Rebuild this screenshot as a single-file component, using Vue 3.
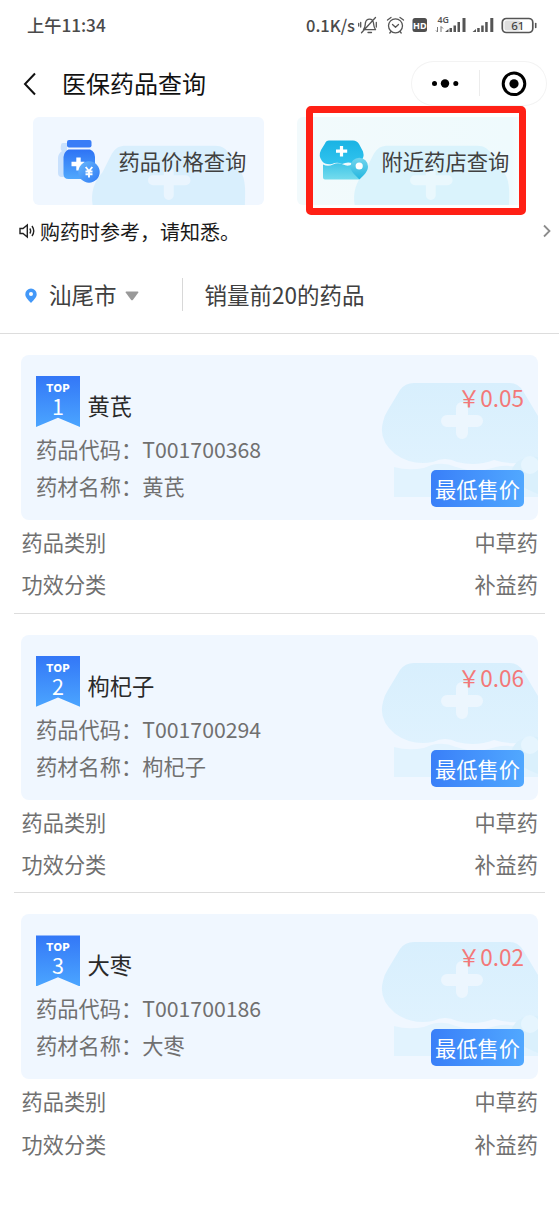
<script setup>
const drugs = [
  { rank: 1, name: '黄芪', code: 'T001700368', price: '0.05' },
  { rank: 2, name: '枸杞子', code: 'T001700294', price: '0.06' },
  { rank: 3, name: '大枣', code: 'T001700186', price: '0.02' },
]
</script>

<template>
  <div class="page">
    <header class="status">
      <span class="clock">上午11:34</span>
      <span class="speed">0.1K/s</span>
      <svg class="status-icons" width="180" height="24" viewBox="0 0 180 24">
        <g fill="none" stroke="#555" stroke-width="1.3" stroke-linecap="round" stroke-linejoin="round">
          <path d="M5.500 16.500C7.500 14.500 7 12 7.500 9.500C8.100 7 9.500 6.200 11.500 6.200C14 6.200 15.200 8 15.500 10C15.800 13 15.800 14.500 17.500 16.700H6.500M10 19.500H13.500M3.500 19.800L17.500 4.500M2.700 9.500V14M0.700 10.500V13M18.300 9.500V14" />
          <circle cx="37.500" cy="12.800" r="7" />
          <path d="M34.500 11.500L37.500 14.200L40.500 11.500M29.500 7L33 4.500M45.500 7L42 4.500M33 18.500L31.800 20M42 18.500L43.200 20" />
        </g>
        <rect x="54.500" y="5" width="14.500" height="14" rx="2.500" fill="#4f4f4f" />
        <text x="61.800" y="15.500" text-anchor="middle" font-size="9" font-weight="700" fill="#fff">HD</text>
        <text x="79.500" y="9.500" font-size="8.800" font-weight="600" fill="#555">4G</text>
        <path d="M79.500 14V19M78 17.500L79.500 19M83 19V13.500L85 15.500" fill="none" stroke="#777" stroke-width="1" />
        <g fill="#555">
          <path d="M87 19L90.500 16V19ZM91.500 15H94V19H91.500ZM95.500 12.500H98V19H95.500ZM99.500 9H102V19H99.500ZM104.500 5H107.500V19H104.500Z" />
          <path d="M114.500 19L118 16V19ZM119.200 15H121.700V19H119.200ZM123.200 12.500H125.700V19H123.200ZM127.200 9H129.700V19H127.200ZM132.300 5H135.300V19H132.300Z" />
        </g>
        <rect x="144.300" y="5.500" width="30.500" height="14" rx="4" fill="#fff" stroke="#555" stroke-width="1.700" />
        <rect x="146.500" y="7.500" width="16" height="10" rx="2" fill="#dedede" />
        <path d="M177.700 10.500V14.500" stroke="#555" stroke-width="1.600" stroke-linecap="round" />
        <text x="159.800" y="16.600" text-anchor="middle" font-size="11.500" font-weight="500" fill="#444">61</text>
      </svg>
    </header>

    <nav class="nav">
      <svg class="back" width="14" height="24" viewBox="0 0 14 24">
        <path d="M12 1.500L2 12L12 22.500" fill="none" stroke="#111" stroke-width="2" />
      </svg>
      <h1>医保药品查询</h1>
      <div class="capsule">
        <svg width="136" height="44" viewBox="0 0 136 44">
          <circle cx="23.500" cy="22.500" r="2.500" />
          <circle cx="34" cy="22.500" r="4.200" />
          <circle cx="44.800" cy="22.500" r="2.500" />
          <path d="M68.500 9V35" stroke="#ececec" />
          <circle cx="103" cy="22.800" r="10.800" fill="none" stroke="#000" stroke-width="3" />
          <circle cx="103" cy="22.800" r="4.600" />
        </svg>
      </div>
    </nav>

    <section class="tabs">
      <div class="tab price-tab">
        <svg class="tab-bg" width="231" height="89" viewBox="0 0 231 89">
          <path d="M59 89C57 77 60 66 69 56L78 38C82 31 86 29 93 29H183C190 29 194 32 198 38L207 53C213 60 214 69 213 89Z" fill="#d9effd" />
          <path d="M136 56V79M120 64H153" stroke="#eaf5fe" stroke-width="10" stroke-linecap="round" />
        </svg>
        <svg class="tab-icon" width="50" height="50" viewBox="0 0 50 50">
          <defs>
            <linearGradient id="jar" x2="0" y2="1"><stop stop-color="#2e73f5" /><stop offset="1" stop-color="#50a8fd" /></linearGradient>
            <linearGradient id="coin" x2="1" y2="1"><stop stop-color="#67b7fc" /><stop offset="1" stop-color="#2f7af5" /></linearGradient>
          </defs>
          <path d="M8 9Q8 7 10 7H14V14H18V41H9Q5 41 5 37V22Q5 18 9 15Q7 14 8 9Z" fill="#c9e1fd" />
          <rect x="14" y="4" width="24.500" height="7.500" rx="2" fill="#397df7" />
          <path d="M15.500 13.500H37Q42 15.500 42 21V38Q42 43 37 43H15.500Q10.500 43 10.500 38V21Q11 15.500 15.500 13.500Z" fill="url(#jar)" />
          <path d="M25.500 21.500V34.500M18.500 28H31.500" stroke="#fff" stroke-width="4.400" />
          <circle cx="36" cy="36" r="10.700" fill="url(#coin)" />
          <path d="M32.700 31L36 35L39.300 31M36 35V41.500M32.500 35.500H39.500M32.500 38.300H39.500" fill="none" stroke="#fff" stroke-width="1.900" />
        </svg>
        <span>药品价格查询</span>
      </div>
      <div class="tab store-tab">
        <svg class="tab-bg" width="231" height="89" viewBox="0 0 231 89">
          <path d="M57 89C55 77 58 66 67 56L76 38C80 31 84 29 91 29H181C188 29 192 32 196 38L205 53C213 60 214 69 213 89Z" fill="#daf3fc" />
          <path d="M134 56V79M118 64H151" stroke="#eaf8fd" stroke-width="10" stroke-linecap="round" />
        </svg>
        <svg class="tab-icon" width="50" height="50" viewBox="0 0 50 50">
          <defs>
            <linearGradient id="roof" x2="0" y2="1"><stop stop-color="#1ab3e4" /><stop offset="1" stop-color="#31c3ee" /></linearGradient>
            <linearGradient id="wall" x2="0" y2="1"><stop stop-color="#3fc5e8" /><stop offset="1" stop-color="#75dced" /></linearGradient>
            <linearGradient id="pin" x2="0" y2="1"><stop stop-color="#73d5ee" /><stop offset="1" stop-color="#23b6df" /></linearGradient>
          </defs>
          <path d="M5 28.500Q10 31 15 28.500Q20 26 25 28.500Q30 31 35 28Q39 26 41 29V43.500H7Q5 43.500 5 41.500Z" fill="url(#wall)" />
          <path d="M11 4.500H35Q39 4.500 41 8L45 15.500Q47 22 42 26Q38 29 34 27Q29 25.500 24 28Q19 25.500 14 28Q7 29 4 25Q0 20 3 14L7 7.500Q8 4.500 11 4.500Z" fill="url(#roof)" />
          <path d="M23.500 10V20.500M18 15.200H29.200" stroke="#fff" stroke-width="3.200" />
          <path d="M41.500 43.500C36 38 32.500 35 32.500 30.500A8.700 8.700 0 0 1 50 30.500C50 35.500 46 39 41.500 43.500Z" fill="url(#pin)" />
          <circle cx="41.200" cy="30" r="3.600" fill="#fff" />
        </svg>
        <span>附近药店查询</span>
        <div class="highlight"></div>
      </div>
    </section>

    <section class="notice">
      <svg width="17" height="16" viewBox="0 0 17 16" fill="none" stroke="#222" stroke-width="1.400">
        <path d="M1 5.500H4L8.300 2V14L4 10.500H1ZM10.800 5.500Q12.500 8 10.800 10.500M13 3Q16.500 8 13 13" />
      </svg>
      <span>购药时参考，请知悉。</span>
      <svg class="more" width="8" height="14" viewBox="0 0 8 14"><path d="M1 1.500L6.500 7L1 12.500" fill="none" stroke="#8c8c8c" stroke-width="1.800" /></svg>
    </section>

    <section class="filter">
      <svg class="pin" width="12" height="16" viewBox="0 0 12 16">
        <path d="M6 15C3 11.500 0.300 9.500 0.300 6.200A5.700 5.700 0 0 1 11.700 6.200C11.700 9.500 9 11.500 6 15Z" fill="#4398f8" />
        <circle cx="6" cy="6" r="2" fill="#fff" />
      </svg>
      <span class="city">汕尾市</span>
      <svg class="caret" width="14" height="10" viewBox="0 0 14 10"><path d="M1.200 0.500H12.800Q14 0.700 13.200 1.800L8 8.800Q7 9.800 6 8.800L0.800 1.800Q0 0.700 1.200 0.500Z" fill="#999" /></svg>
      <i class="divider"></i>
      <span>销量前20的药品</span>
    </section>

    <main class="list">
      <article v-for="d in drugs" :key="d.rank" class="drug">
        <div class="card">
          <svg class="card-bg" width="160" height="130" viewBox="0 0 160 130">
            <defs>
              <linearGradient id="shop" x2="0" y2="1"><stop stop-color="#d8effd" /><stop offset="1" stop-color="#dff2fe" /></linearGradient>
            </defs>
            <path d="M16 88Q30 92 46 89Q62 81 78 88Q98 95 118 88Q135 84 160 94V118H16Z" fill="#e2f3fe" />
            <path d="M36 4H132Q140 4 145 12L160 37V80Q138 88 116 81Q98 88 79 83Q67 77 55 83Q34 87 17 75Q0 61 5 43Q6 37 10 31L22 11Q27 4 36 4Z" fill="url(#shop)" />
            <path d="M84 29V54M69 42H99" stroke="#ecf6fe" stroke-width="12" stroke-linecap="round" />
            <path d="M134 90Q141 76 160 78V115Q137 106 134 96Z" fill="#daf0fc" />
            <circle cx="152" cy="86" r="9" fill="#e6f5fe" />
          </svg>
          <div class="head">
            <div class="ribbon"><b>TOP</b><span>{{ d.rank }}</span></div>
            <h2>{{ d.name }}</h2>
          </div>
          <p class="code">药品代码：{{ d.code }}</p>
          <p class="material">药材名称：{{ d.name }}</p>
          <div class="aside">
            <span class="price">￥{{ d.price }}</span>
            <span class="lowest">最低售价</span>
          </div>
        </div>
        <div class="row"><span>药品类别</span><span>中草药</span></div>
        <div class="row"><span>功效分类</span><span>补益药</span></div>
      </article>
    </main>
  </div>
</template>

<style>
body {
  margin: 0;
  background: #fff;
}
</style>

<style scoped>
.page {
  width: 559px;
  height: 1213px;
  overflow: hidden;
  background: #fff;
  font-family: "Noto Sans CJK SC", "Noto Sans", sans-serif;
  font-weight: 400;
  color: #404040;
}
h1, h2, p {
  margin: 0;
  font-weight: inherit;
}
svg {
  display: block;
  flex: none;
}
.status {
  display: flex;
  align-items: center;
  height: 50px;
  padding-left: 27px;
  font-weight: 500;
  color: #4a4a4a;
}
.clock {
  width: 279px;
  font-size: 17.2px;
  line-height: 48px;
}
.speed {
  width: 52px;
  font-size: 16.5px;
}
.status-icons {
  font-family: "Noto Sans", sans-serif;
}
.nav {
  display: flex;
  align-items: center;
  height: 67px;
  padding-left: 23px;
}
.nav h1 {
  width: 350px;
  margin: -2px 0 0 25px;
  font-size: 24px;
  line-height: 36px;
  color: #111;
}
.capsule {
  box-sizing: border-box;
  width: 136px;
  height: 45px;
  margin-left: -1px;
  border-radius: 23px;
  box-shadow: inset 0 0 0 1px #f3f3f3;
}
.tabs {
  display: flex;
  gap: 33px;
  height: 89px;
  padding-left: 33px;
}
.tab {
  position: relative;
  display: flex;
  align-items: center;
  width: 231px;
  height: 88px;
  flex: none;
  border-radius: 6px;
  background: #f0f7ff;
  font-size: 21.3px;
}
.tab-bg {
  position: absolute;
  left: 0;
  top: 0;
  height: 88px;
}
.tab-icon {
  position: relative;
  margin-left: 20px;
}
.tab > span {
  position: relative;
  margin: -1px 0 0 15.5px;
}
.store-tab {
  background: linear-gradient(90deg, #f2fafc, #effafd 93%, #fff);
}
.store-tab .tab-icon {
  margin-left: 21px;
}
.store-tab > span {
  margin-left: 13.5px;
}
.highlight {
  position: absolute;
  box-sizing: border-box;
  left: 9px;
  top: -11px;
  width: 220px;
  height: 109px;
  border: 7px solid #ff2015;
  border-radius: 5px;
}
.notice {
  display: flex;
  align-items: center;
  height: 50px;
  padding: 0 8px 0 19px;
  font-size: 20px;
  color: #1a1a1a;
}
.notice span {
  margin-left: 4px;
}
.notice .more {
  margin-left: auto;
}
.filter {
  box-sizing: border-box;
  display: flex;
  align-items: center;
  height: 78px;
  border-bottom: 1px solid #ddd;
  padding-left: 25px;
  font-size: 22.5px;
}
.pin {
  margin-top: 2px;
}
.filter > span {
  margin-top: -1px;
}
.city {
  margin-left: 12px;
}
.caret {
  margin: 2px 0 0 8px;
}
.divider {
  width: 1px;
  height: 33px;
  margin: -1px 22px 0 43px;
  background: #d8d8d8;
}
.list {
  padding: 0 14px;
}
.drug {
  box-sizing: border-box;
  height: 279.7px;
  padding: 21px 7px 0;
  border-bottom: 1px solid #ddd;
}
.drug:last-child {
  border-bottom: 0;
}
.card {
  position: relative;
  box-sizing: border-box;
  height: 165px;
  padding: 21px 15px 0;
  border-radius: 8px;
  background: #f0f7ff;
  margin-bottom: 1px;
}
.card-bg {
  position: absolute;
  right: 0;
  top: 24px;
}
.head {
  display: flex;
  height: 51px;
}
.ribbon {
  display: flex;
  flex-direction: column;
  align-items: center;
  width: 44px;
  height: 51px;
  background: linear-gradient(#3377f7, #4ba5ff);
  clip-path: polygon(0 0, 100% 0, 100% 100%, 50% 82%, 0 100%);
  color: #fff;
}
.ribbon b {
  margin-top: 6px;
  font-family: Inter, "Noto Sans", sans-serif;
  font-size: 11px;
  line-height: 13px;
  font-weight: 800;
  letter-spacing: 0.4px;
}
.ribbon span {
  font-size: 21.5px;
  line-height: 22px;
}
.head h2 {
  margin: 11px 0 0 7.5px;
  font-size: 22.3px;
  line-height: 36px;
  color: #2a2a2a;
}
.code, .material {
  font-size: 21.25px;
  line-height: 37px;
  color: #707070;
}
.code {
  margin-top: 3px;
}
.aside {
  position: absolute;
  top: 26px;
  right: 14px;
  display: flex;
  flex-direction: column;
  align-items: flex-end;
}
.price {
  font-size: 22.5px;
  line-height: 32px;
  color: #f37878;
}
.lowest {
  box-sizing: border-box;
  width: 93px;
  height: 37px;
  margin-top: 57px;
  border-radius: 5px;
  background: linear-gradient(90deg, #397ff8, #51a8ff);
  font-size: 21.25px;
  line-height: 37px;
  text-align: center;
  color: #fff;
}
.row {
  display: flex;
  justify-content: space-between;
  padding: 0 0 0 0.5px;
  font-size: 21.2px;
  line-height: 42.3px;
  color: #707070;
}
</style>
